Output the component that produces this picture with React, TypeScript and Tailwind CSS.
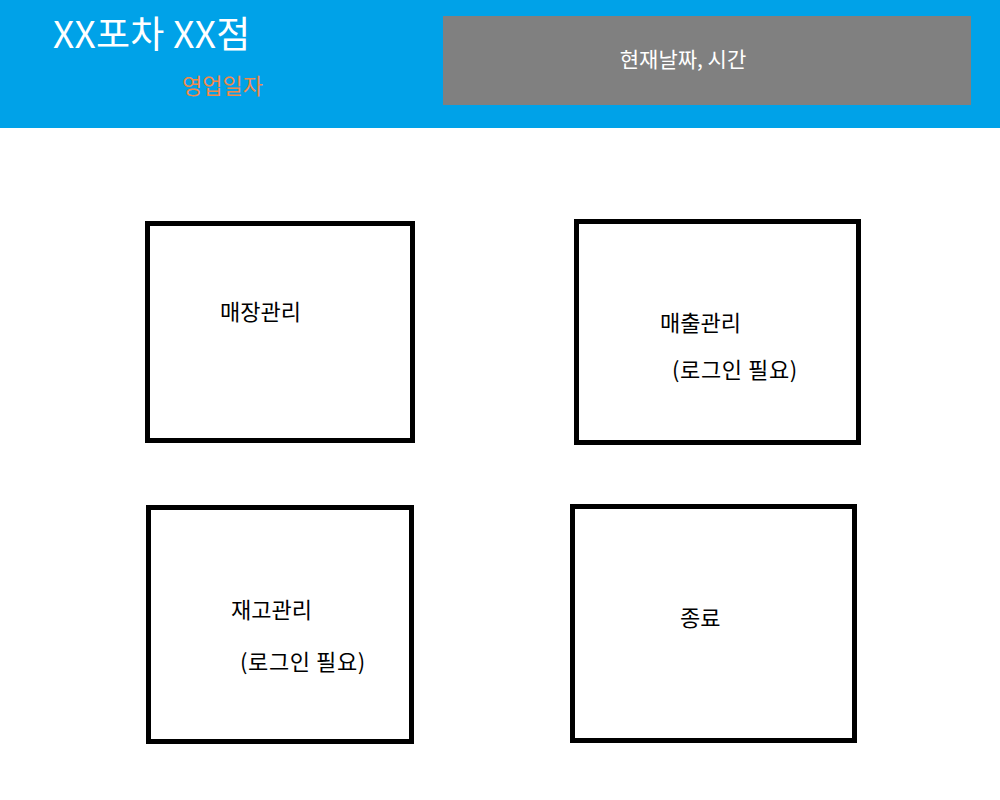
const font = { fontFamily: '"Noto Sans CJK KR", "Noto Sans", sans-serif' };

function App() {
  return (
    <div className="min-h-[800px] w-[1000px] bg-white" style={font}>
      <header className="flex h-[128px] bg-[#00a2e8]">
        <div className="w-[443px] pl-[53px] pt-[10px]">
          <h1 className="text-[37px] leading-[44px] tracking-[0.3px] text-white">XX포차 XX점</h1>
          <p className="mt-[16px] pl-[129px] text-[22px] leading-[28px] text-[#f08a4b]">영업일자</p>
        </div>
        <div className="mt-[16px] flex h-[89px] w-[528px] items-center justify-center bg-[#808080] pb-[4px] pr-[48px] text-[21px] text-white">
          현재날짜, 시간
        </div>
      </header>

      <main className="text-[22px] leading-[30px] text-black">
        <div className="mt-[91px] flex items-start">
          <div className="ml-[145px] mt-[2px] h-[222px] w-[270px] border-[5px] border-black pl-[70px] pt-[69px]">
            매장관리
          </div>
          <div className="ml-[159px] h-[226px] w-[287px] border-[5px] border-black pl-[81px] pt-[82px]">
            <p>매출관리</p>
            <p className="mt-[17px] pl-[12px] tracking-[0.6px]">(로그인 필요)</p>
          </div>
        </div>

        <div className="mt-[59px] flex items-start">
          <div className="ml-[146px] mt-[1px] h-[239px] w-[268px] border-[5px] border-black pl-[80px] pt-[83px]">
            <p>재고관리</p>
            <p className="mt-[22px] pl-[9px] tracking-[0.6px]">(로그인 필요)</p>
          </div>
          <div className="ml-[156px] h-[239px] w-[287px] border-[5px] border-black pl-[105px] pt-[92px]">
            종료
          </div>
        </div>
      </main>
    </div>
  );
}

export default App;
